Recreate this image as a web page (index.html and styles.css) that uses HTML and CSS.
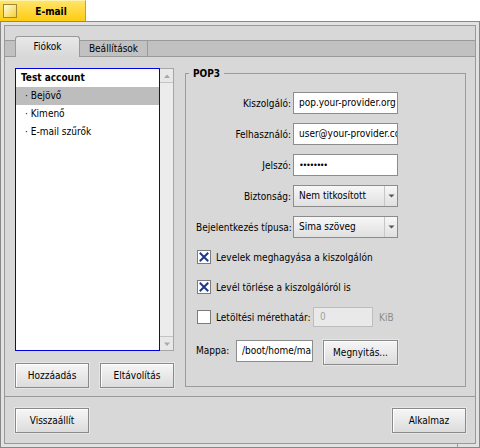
FILE: index.html
```html
<!DOCTYPE html>
<html>
<head>
<meta charset="utf-8">
<title>E-mail</title>
<link rel="stylesheet" href="styles.css">
</head>
<body>
<div class="titlebar">
  <div class="wtab"><span class="closebox"></span><span class="wtitle">E-mail</span></div>
</div>
<div class="frame">
  <div class="win">
    <div class="tabstrip">
      <div class="tab active">Fiókok</div>
      <div class="tab">Beállítások</div>
    </div>
    <div class="panel">
      <div class="leftcol">
        <div class="listwrap">
          <div class="list">
            <div class="item acct">Test account</div>
            <div class="item sub sel">· Bejövő</div>
            <div class="item sub">· Kimenő</div>
            <div class="item sub">· E-mail szűrők</div>
          </div>
          <div class="vscroll">
            <div class="sbtn up"><svg width="12" height="12" viewBox="0 0 12 12"><path d="M3 8 L6 4.5 L9 8 Z" fill="#a9a9a9"/></svg></div>
            <div class="strack"></div>
            <div class="sbtn down"><svg width="12" height="12" viewBox="0 0 12 12"><path d="M3 4.5 L6 8 L9 4.5 Z" fill="#a9a9a9"/></svg></div>
          </div>
        </div>
        <div class="btnrow">
          <div class="btn">Hozzáadás</div>
          <div class="btn">Eltávolítás</div>
        </div>
      </div>
      <div class="group">
        <div class="legend">POP3</div>
        <div class="frow"><span class="flabel">Kiszolgáló:</span><span class="field">pop.your-provider.org</span></div>
        <div class="frow"><span class="flabel">Felhasználó:</span><span class="field">user@your-provider.com</span></div>
        <div class="frow"><span class="flabel">Jelszó:</span><span class="field pw">••••••••</span></div>
        <div class="frow"><span class="flabel">Biztonság:</span><span class="menu"><span class="mtext">Nem titkosított</span><span class="marrow"><svg width="7" height="4" viewBox="0 0 7 4"><path d="M0.5 0.5 L3.5 3.5 L6.5 0.5 Z" fill="#555"/></svg></span></span></div>
        <div class="frow"><span class="flabel">Bejelentkezés típusa:</span><span class="menu"><span class="mtext">Sima szöveg</span><span class="marrow"><svg width="7" height="4" viewBox="0 0 7 4"><path d="M0.5 0.5 L3.5 3.5 L6.5 0.5 Z" fill="#555"/></svg></span></span></div>
        <div class="crow"><span class="cb"><svg width="12" height="12" viewBox="0 0 12 12"><path d="M2.5 2.5 L9.5 9.5 M9.5 2.5 L2.5 9.5" stroke="#1d3a86" stroke-width="2" stroke-linecap="square"/></svg></span><span>Levelek meghagyása a kiszolgálón</span></div>
        <div class="crow"><span class="cb"><svg width="12" height="12" viewBox="0 0 12 12"><path d="M2.5 2.5 L9.5 9.5 M9.5 2.5 L2.5 9.5" stroke="#1d3a86" stroke-width="2" stroke-linecap="square"/></svg></span><span>Levél törlése a kiszolgálóról is</span></div>
        <div class="crow limit"><span class="cb"></span><span class="limitlabel">Letöltési mérethatár:</span><span class="field disabled">0</span><span class="unit">KiB</span></div>
        <div class="mrow"><span class="mlabel">Mappa:</span><span class="field path">/boot/home/mail/in</span><div class="btn open">Megnyitás...</div></div>
      </div>
    </div>
    <div class="bottombar">
      <div class="btn">Visszaállít</div>
      <div class="btn">Alkalmaz</div>
    </div>
  </div>
</div>
</body>
</html>
```

FILE: styles.css
```css
* { box-sizing: border-box; }
html, body { margin: 0; padding: 0; }
body {
  width: 480px;
  height: 448px;
  overflow: hidden;
  background: #ffffff;
  font-family: "DejaVu Sans Condensed", "Liberation Sans", Arial, sans-serif;
  font-size: 10px;
  color: #000;
}

/* window tab */
.titlebar { height: 21px; display: flex; }
.wtab {
  width: 86px;
  height: 21px;
  display: flex;
  align-items: center;
  background: linear-gradient(#ffe468, #ffcc12);
  border-right: 1px solid #b9a04c;
  border-top: 1px solid #fff3b0;
}
.closebox {
  width: 14px;
  height: 14px;
  margin-left: 3px;
  border: 1px solid #9c8836;
  background: linear-gradient(135deg, #fffbe2, #f5cf33);
}
.wtitle { flex: 1; text-align: center; font-weight: bold; }

/* window frame */
.frame {
  position: relative;
  width: 480px;
  height: 427px;
  border: 1px solid #888;
  background: #e2e2e2;
  padding: 3px;
}
.frame::after {
  content: "";
  position: absolute;
  left: 456px;
  bottom: 0;
  width: 1px;
  height: 3px;
  background: #999;
}
.win {
  height: 419px;
  border: 1px solid #999;
  background: #d8d8d8;
  display: flex;
  flex-direction: column;
}

/* tab view */
.tabstrip {
  margin-top: 10px;
  height: 21px;
  display: flex;
  background: linear-gradient(to bottom, transparent 4px, #999 4px, #999 5px, #c1c1c1 5px, #c1c1c1 20px, #999 20px);
}
.tab {
  display: flex;
  align-items: center;
  justify-content: center;
}
.tab.active {
  margin-left: 10px;
  width: 65px;
  height: 21px;
  border: 1px solid #999;
  border-bottom: none;
  border-radius: 3px 3px 0 0;
  background: linear-gradient(#e8e8e8, #d8d8d8);
  padding-bottom: 1px;
}
.tab:not(.active) {
  margin-top: 5px;
  width: 68px;
  height: 15px;
  border-right: 1px solid #999;
}

.panel {
  height: 340px;
  border-bottom: 1px solid #999;
  display: flex;
  padding: 11px 9px 0 10px;
}
.leftcol { width: 159px; display: flex; flex-direction: column; }
.listwrap { height: 283px; display: flex; }
.list {
  width: 145px;
  border: 1px solid #0000e0;
  background: #fff;
}
.item {
  height: 18px;
  line-height: 18px;
  padding-left: 5px;
  white-space: nowrap;
}
.item.acct { font-weight: bold; }
.item.sub { padding-left: 9px; }
.item.sel { background: #bdbdbd; }

.vscroll {
  width: 14px;
  border: 1px solid #a6a6a6;
  border-left: none;
  background: #e4e4e4;
  display: flex;
  flex-direction: column;
}
.sbtn {
  height: 14px;
  display: flex;
  align-items: center;
  justify-content: center;
  background: #e8e8e8;
}
.sbtn.up { border-bottom: 1px solid #c4c4c4; }
.sbtn.down { border-top: 1px solid #c4c4c4; }
.strack { flex: 1; background: #ececec; }

.btnrow { margin-top: 12px; display: flex; gap: 11px; }

.btn {
  width: 74px;
  height: 25px;
  border: 1px solid #8a8a8a;
  background: linear-gradient(#f6f6f6, #dcdcdc);
  box-shadow: inset 1px 1px 0 #fff, 0 0 0 1px #e6e6e6;
  display: flex;
  align-items: center;
  justify-content: center;
  white-space: nowrap;
}

/* POP3 group */
.group {
  position: relative;
  margin-left: 11px;
  margin-top: 5px;
  width: 281px;
  height: 314px;
  border: 1px solid #9c9c9c;
  padding: 18px 0 0 10px;
}
.legend {
  position: absolute;
  top: -7px;
  left: 3px;
  padding: 0 4px;
  line-height: 14px;
  background: #d8d8d8;
  font-weight: bold;
}
.frow {
  display: flex;
  align-items: center;
  height: 22px;
  margin-bottom: 9px;
}
.flabel {
  width: 95px;
  margin-right: 2px;
  text-align: right;
  white-space: nowrap;
}
.field {
  width: 105px;
  height: 22px;
  border: 1px solid #8c8c8c;
  background: #fff;
  padding-left: 5px;
  line-height: 20px;
  overflow: hidden;
  white-space: nowrap;
}
.field.pw { font-size: 9px; letter-spacing: -1.3px; }
.menu {
  width: 105px;
  height: 22px;
  border: 1px solid #8c8c8c;
  background: linear-gradient(#f7f7f7, #e0e0e0);
  display: flex;
}
.mtext { flex: 1; padding-left: 5px; line-height: 20px; white-space: nowrap; }
.marrow {
  width: 13px;
  border-left: 1px solid #c6c6c6;
  display: flex;
  align-items: center;
  justify-content: center;
}

.crow {
  display: flex;
  align-items: center;
  height: 20px;
  margin-bottom: 10px;
  white-space: nowrap;
}
.crow.limit { margin-bottom: 13px; }
.cb {
  width: 14px;
  height: 14px;
  margin-left: 1px;
  margin-right: 5px;
  border: 1px solid #7c7c7c;
  background: #fff;
  display: flex;
  align-items: center;
  justify-content: center;
}
.limitlabel { width: 97px; }
.field.disabled {
  width: 60px;
  height: 20px;
  line-height: 18px;
  padding-left: 6px;
  border-color: #bdbdbd;
  background: #e9e9e9;
  color: #a2a2a2;
}
.unit { margin-left: 6px; color: #8c8c8c; }

.mrow { display: flex; align-items: flex-start; }
.mlabel { width: 40px; line-height: 22px; }
.field.path { width: 77px; }
.btn.open { margin-left: 10px; width: 75px; }

.bottombar {
  display: flex;
  justify-content: space-between;
  padding: 11px 9px 0 10px;
}
```
